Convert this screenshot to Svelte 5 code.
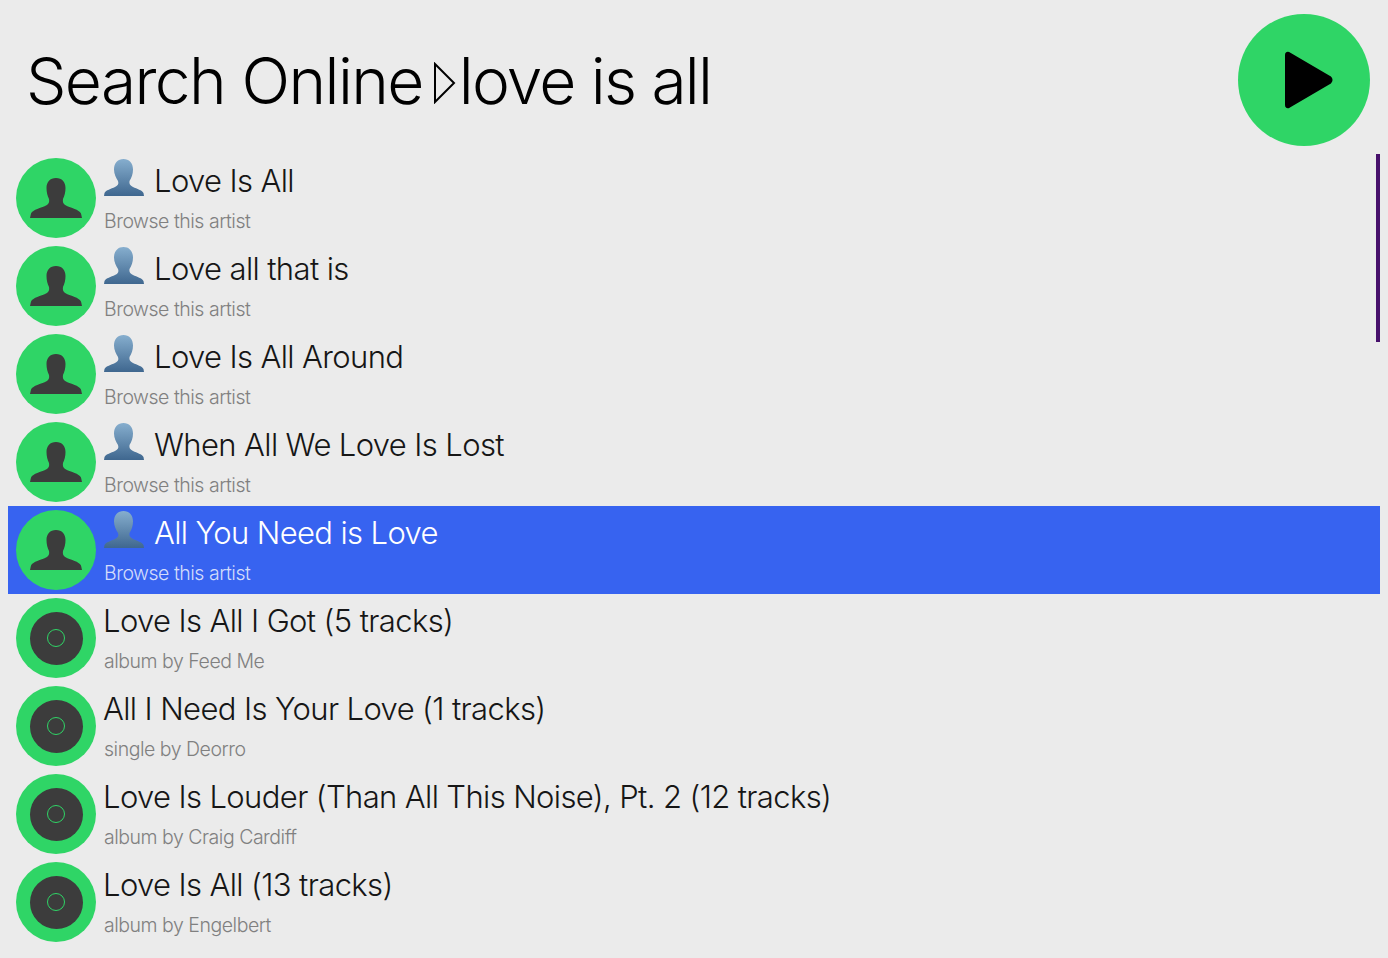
<script lang="ts">
    const results = [
        { title: 'Love Is All', sub: 'Browse this artist', kind: 'artist' },
        { title: 'Love all that is', sub: 'Browse this artist', kind: 'artist' },
        { title: 'Love Is All Around', sub: 'Browse this artist', kind: 'artist' },
        { title: 'When All We Love Is Lost', sub: 'Browse this artist', kind: 'artist' },
        { title: 'All You Need is Love', sub: 'Browse this artist', kind: 'artist', selected: true },
        { title: 'Love Is All I Got (5 tracks)', sub: 'album by Feed Me', kind: 'album' },
        { title: 'All I Need Is Your Love (1 tracks)', sub: 'single by Deorro', kind: 'album' },
        { title: 'Love Is Louder (Than All This Noise), Pt. 2 (12 tracks)', sub: 'album by Craig Cardiff', kind: 'album' },
        { title: 'Love Is All (13 tracks)', sub: 'album by Engelbert', kind: 'album' }
    ];
</script>

<div class="page">
    <header class="header">
        <h1 class="crumbs">
            <span>Search Online</span>
            <svg class="crumb-sep" viewBox="0 0 22 42" width="22" height="42">
                <path d="M1 2 L20 21 L1 40 Z" fill="none" stroke="#000" stroke-width="2" />
            </svg>
            <span class="query">love is all</span>
        </h1>
        <button class="play" aria-label="Play">
            <svg viewBox="0 0 50 58" width="50" height="58">
                <path d="M3 4 Q3 1 6 2 L47 26 Q50 29 47 32 L6 56 Q3 57 3 54 Z" stroke="#000" stroke-width="2" stroke-linejoin="round" />
            </svg>
        </button>
    </header>

    <div class="list">
        {#each results as item}
            <div class="row" class:selected={item.selected}>
                <div class="avatar">
                    {#if item.kind === 'artist'}
                        <svg viewBox="0 0 80 80" width="80" height="80">
                            <path fill="#3c3c3c" d="M40 20 C46 20 49.500 24 49.500 30 C49.500 34 48.500 38 47 41 C46.500 44 47 46 50 47.500 C55 50 63 51.500 65 55.500 L66 60 L14 60 L15 55.500 C17 51.500 25 50 30 47.500 C33 46 33.500 44 33 41 C31.500 38 30.500 34 30.500 30 C30.500 24 34 20 40 20 Z" />
                        </svg>
                    {:else}
                        <div class="disc"><div class="hole"></div></div>
                    {/if}
                </div>
                <div class="text">
                    <div class="title">
                        {#if item.kind === 'artist'}
                            <svg class="person" viewBox="0 0 40 40" width="40" height="40">
                                <defs>
                                    <linearGradient id="personFill" x1="0" y1="0" x2="0" y2="1">
                                        <stop offset="0" stop-color="#86aece" />
                                        <stop offset="1" stop-color="#3f678f" />
                                    </linearGradient>
                                </defs>
                                <path fill="url(#personFill)" d="M19.500 1 C25 1 29 5 29 11.500 C29 16 27.500 20 25.500 23 C25 26 26 27.500 29 29 C33 31 38 32 39.500 35 L40 38 L0 38 L0.500 35 C2 32 7 31 11 29 C14 27.500 15 26 14 23 C12 20 10 16 10 11.500 C10 5 14 1 19.500 1 Z" />
                            </svg>
                        {/if}
                        <span>{item.title}</span>
                    </div>
                    <div class="sub">{item.sub}</div>
                </div>
            </div>
        {/each}
        <div class="scrollbar"></div>
    </div>
</div>

<style>
    :global(body) {
        background: #ebebeb;
    }

    .page {
        height: 958px;
        overflow: hidden;
    }

    .header {
        display: flex;
        align-items: center;
        justify-content: space-between;
        height: 132px;
        padding: 14px 18px 8px 26px;
    }

    .crumbs {
        display: flex;
        align-items: center;
        gap: 8px;
        margin: 0;
        font-family: Inter, sans-serif;
        font-size: 64px;
        font-weight: 300;
        letter-spacing: -1.600px;
        color: #000;
    }

    .crumb-sep {
        flex: none;
        margin: 5px -5px 0 3px;
    }

    .query {
        letter-spacing: -1.800px;
    }

    .play {
        display: flex;
        align-items: center;
        justify-content: center;
        width: 132px;
        height: 132px;
        padding: 0 0 0 8px;
        border: none;
        border-radius: 50%;
        background: #2fd566;
    }

    .list {
        position: relative;
        margin: 0 8px;
    }

    .row {
        display: flex;
        gap: 8px;
        height: 80px;
        padding: 4px 8px;
    }

    .row.selected {
        background: #3763f0;
    }

    .avatar {
        display: flex;
        align-items: center;
        justify-content: center;
        flex: none;
        width: 80px;
        height: 80px;
        border-radius: 50%;
        background: #2fd566;
    }

    .disc {
        display: flex;
        align-items: center;
        justify-content: center;
        width: 53px;
        height: 53px;
        border-radius: 50%;
        background: #3c3c3c;
    }

    .hole {
        width: 18px;
        height: 18px;
        box-sizing: border-box;
        border: 1px solid #2fd566;
        border-radius: 50%;
    }

    .text {
        display: flex;
        flex-direction: column;
    }

    .title {
        display: flex;
        flex: none;
        align-items: center;
        gap: 10px;
        height: 45px;
        font-family: Inter, sans-serif;
        font-size: 31px;
        font-weight: 300;
        letter-spacing: -0.620px;
        color: #161616;
        white-space: nowrap;
    }

    .title span {
        margin-left: -1px;
    }

    .person {
        align-self: flex-start;
    }

    .person + span {
        margin-left: 0;
    }

    .sub {
        flex: none;
        font-family: Inter, sans-serif;
        font-size: 19.500px;
        font-weight: 300;
        letter-spacing: -0.480px;
        line-height: 37px;
        color: #808080;
    }

    .selected .title {
        color: #fff;
    }

    .selected .sub {
        color: #d3dcfb;
    }

    .scrollbar {
        position: absolute;
        top: 0;
        right: 0;
        width: 4px;
        height: 188px;
        background: #47106b;
    }
</style>
